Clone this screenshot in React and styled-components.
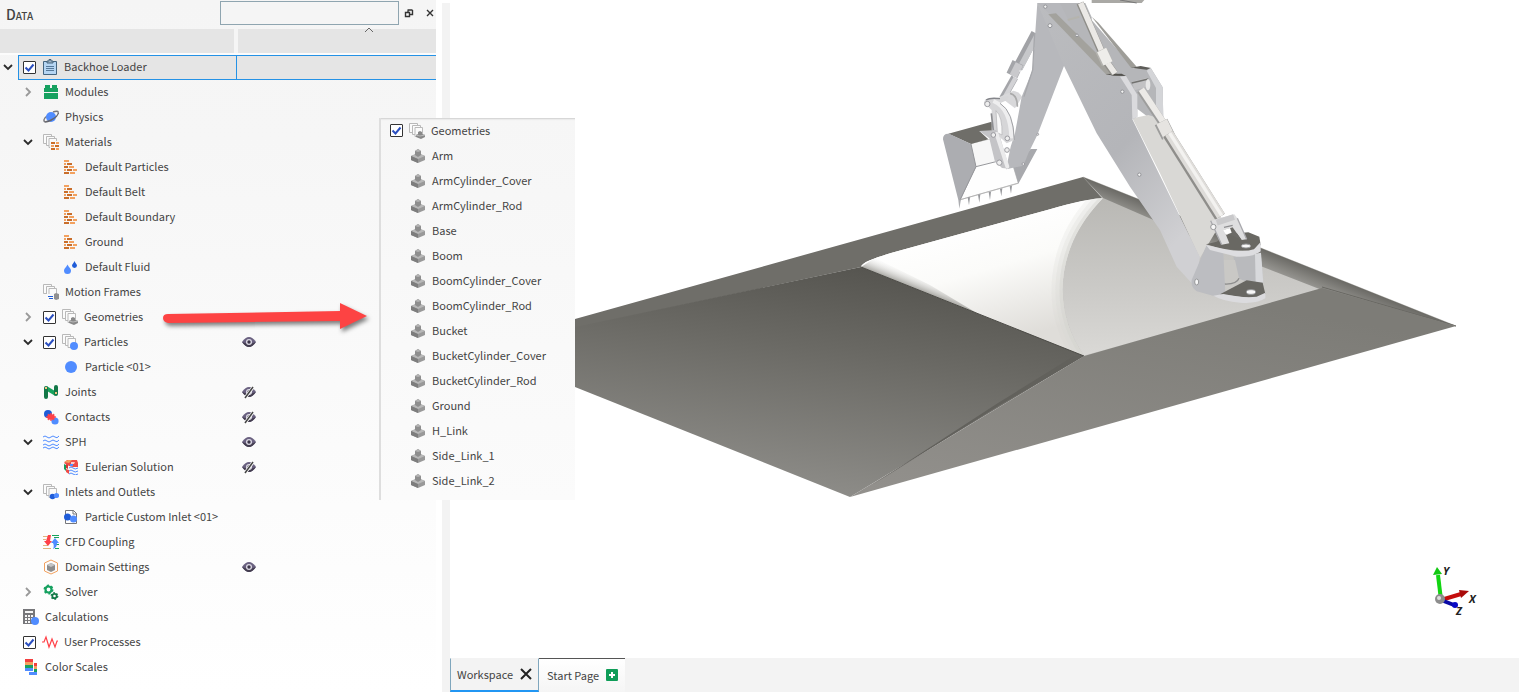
import styled, { createGlobalStyle, css } from 'styled-components';

const stack = (
    <g fill='#fbfbfb' stroke='#b9b9b9'>
        <path d='M.5.5h8v9h-8z' />
        <path d='M3.500 2.500h8v9h-8z' />
        <path d='M6 4.500h7.500v9H6z' />
    </g>
);

const icons = {
    project: (
        <>
            <path d='M1.500 2.500h13v13h-13z' fill='#b5d5f3' stroke='#44647f' />
            <path d='M5 4V2h2V.5h2V2h2v2z' fill='#9fb3c4' stroke='#44647f' />
            <path d='M4 7.500h8M4 9.500h8M4 11.500h8' stroke='#56799a' />
        </>
    ),
    modules: <path d='M1 8V4h1V1h5v3h2V1h5v3h1v4zM1 9h14v6H1z' fill='#16a160' />,
    physics: (
        <>
            <path d='M4 7C1 9 0 12 2 13' fill='none' stroke='#77777d' strokeWidth='1.400' />
            <path d='M10 3C13 2 15 2 15.500 3.500' fill='none' stroke='#77777d' strokeWidth='1.400' />
            <circle cx='8' cy='8' r='5' fill='#508cff' />
            <path d='M2 13C6 13 15 8 15.500 3.500' fill='none' stroke='#65656b' strokeWidth='1.400' />
        </>
    ),
    materials: (
        <>
            {stack}
            <path d='M7 7h9v9H7z' fill='#f8f8f8' />
            <path d='M8 9h4M12 12h4M8 15h4' stroke='#cc6d27' strokeWidth='2' />
            <path d='M13 9h3M8 12h3M13 15h3' stroke='#f2a15f' strokeWidth='2' />
        </>
    ),
    bricks: (
        <>
            <path d='M1 2h5M1 5h2M6 8h5M10 11h4M7 14h5' stroke='#f2a15f' strokeWidth='2' />
            <path d='M4 5h5M1 8h4M4 11h5M1 14h5' stroke='#c96e2b' strokeWidth='2' />
            <path d='M1 11h2' stroke='#f2a15f' strokeWidth='2' />
        </>
    ),
    fluid: (
        <>
            <path d='M4.500 5.500C3.500 8 1 9.500 1 11.500a3.500 3.500 0 0 0 7 0C8 9.500 5.500 8 4.500 5.500z' fill='#508cff' />
            <path d='M11.500 2C11 4 9 5 9 6.500a2.500 2.500 0 0 0 5 0C14 5 12 4 11.500 2z' fill='#1f5cd8' />
        </>
    ),
    motion: (
        <>
            {stack}
            <path d='M3 10h9v6H3z' fill='#fafafa' />
            <path d='M5 12.500h5M6 14.500h4' stroke='#1f5cd8' />
            <path d='M11 10l2-1 3 1v5l-3 1-2-1z' fill='#909090' />
        </>
    ),
    geometries: (
        <>
            {stack}
            <path d='M7 12l2-1V9l2-1 2 1v2l3 1v2l-4 2-5-2z' fill='#888' />
            <path d='M7 12l4 1 5-1' fill='none' stroke='#b9b9b9' />
        </>
    ),
    particles: (
        <>
            {stack}
            <circle cx='12' cy='12' r='4' fill='#508cff' />
        </>
    ),
    particle: <circle cx='8' cy='8' r='6' fill='#508cff' />,
    joints: (
        <>
            <path d='M3 4l10 6' stroke='#18a35e' strokeWidth='4' />
            <path d='M3 4v9M13 3v7' stroke='#127747' strokeWidth='4' strokeLinecap='round' />
            <path d='M2 3h2v2H2zM12 8h2v2h-2z' fill='#f3c583' />
        </>
    ),
    contacts: (
        <>
            <circle cx='5' cy='5' r='4' fill='#1f5cd8' />
            <circle cx='12' cy='12' r='3.600' fill='#508cff' />
            <path d='M8 4l1 2 2-1v2l2 1-2 1v2l-2-1-1 2-1-2-2 1V9L3 8l2-1V5l2 1z' fill='#ff4048' stroke='#ff4048' strokeWidth='.6' />
        </>
    ),
    waves: (
        <path
            d='M0 3q2-2 4 0t4 0 4 0 4-1M0 7q2-2 4 0t4 0 4 0 4-1M0 11q2-2 4 0t4 0 4 0 4-1M0 14q2-2 4 0t4 0 4 0 4-1'
            fill='none'
            stroke='#508cff'
        />
    ),
    eulerian: (
        <>
            <path d='M1 4l3-3h10l1 3v5l-5-1-4-1z' fill='#ef4b46' />
            <path d='M1 3l4-2h4L6 4z' fill='#f2a15f' />
            <path d='M7 5h3v2H7z' fill='#508cff' />
            <path d='M8 3h4l-1 2H8z' fill='#fff' opacity='.7' />
            <path d='M1 5l2 1v6l-2-2z' fill='#1a9a5a' />
            <path d='M3 10l3 1v4l-3-2z' fill='#ef4b46' />
            <path d='M3 5l2 1v4l-2-1z' fill='#d23535' />
            <path d='M6 8h10v8H6z' fill='#fafafa' />
            <path d='M6 9q2-2 4 0t5 0M6 12q2-2 4 0t5 0M6 15q2-2 4 0t5 0' fill='none' stroke='#508cff' />
        </>
    ),
    inlets: (
        <>
            {stack}
            <circle cx='9.500' cy='12.500' r='2.800' fill='#1f5cd8' />
            <circle cx='13.500' cy='11.500' r='2.600' fill='#508cff' />
        </>
    ),
    customInlet: (
        <>
            <path d='M2.500 1.500h8l3 3v10h-11z' fill='#fff' stroke='#77777b' />
            <path d='M10 1v4h4' fill='none' stroke='#77777b' />
            <circle cx='4.500' cy='8' r='3.500' fill='#1f5cd8' />
            <circle cx='10.500' cy='10' r='3.500' fill='#508cff' />
        </>
    ),
    cfd: (
        <>
            <path d='M0 2.500h6M0 5.500h3M0 11.500h5M0 14.500h8' stroke='#e0b37e' />
            <path d='M9 1.500h7M11 3.500h5M13 10.500h3M12 14.500h4' stroke='#18a35e' />
            <path d='M5 1h3L7 7h2l-4 5-4-5h2z' fill='#ff4048' />
            <path d='M12 4l4 5h-2c0 3-1 5-4 6 1-2 1-4 0-6H8z' fill='#508cff' />
        </>
    ),
    domain: (
        <>
            <path d='M1.500 4L8 1l6.500 3v8L8 15l-6.500-3z' fill='none' stroke='#f2a15f' />
            <path d='M4 6l4-2 4 2v5l-4 2-4-2z' fill='#8d8d8d' />
            <path d='M4 6l4-2 4 2-4 2z' fill='#c4c4c4' />
        </>
    ),
    solver: (
        <>
            <circle cx='5.500' cy='5.500' r='3' fill='none' stroke='#16a160' strokeWidth='2.200' />
            <circle cx='5.500' cy='5.500' r='4.300' fill='none' stroke='#16a160' strokeWidth='1.400' strokeDasharray='2.200 2.300' />
            <circle cx='11.500' cy='12' r='2.200' fill='none' stroke='#137a48' strokeWidth='1.800' />
            <circle cx='11.500' cy='12' r='3.300' fill='none' stroke='#137a48' strokeWidth='1.200' strokeDasharray='1.700 1.750' />
        </>
    ),
    calculator: (
        <>
            <path d='M0 0h12v15H0z' fill='#77777a' />
            <path d='M2 2h8v2H2zM2 6h2v2H2zM5 6h2v2H5zM8 6h2v2H8zM2 9h2v2H2zM5 9h2v2H5zM8 9h2v2H8zM2 12h2v2H2zM5 12h2v2H5z' fill='#f6f6f6' />
            <circle cx='12' cy='12' r='4' fill='#508cff' />
        </>
    ),
    process: <path d='M0 8h2l2-5 3 10 3-8 3 8 2-6h1' fill='none' stroke='#ff4048' strokeWidth='1.200' />,
    scales: (
        <>
            <path d='M2 0h8v3H2z' fill='#f33f3f' />
            <path d='M2 3h8v3H2z' fill='#f2a15f' />
            <path d='M2 6h8v3H2z' fill='#16a160' />
            <path d='M2 9h8v3H2zM6 13h8v3H6z' fill='#508cff' />
            <path d='M11 4h3v3h-3z' fill='#f33f3f' />
            <path d='M11 7h3v3h-3z' fill='#f2a15f' />
            <path d='M11 10h3v3h-3z' fill='#16a160' />
        </>
    ),
    body: (
        <>
            <path d='M1 8l7-3 7 3v4l-7 3-7-3z' fill='#999' />
            <path d='M1 8l7-3 7 3-7 3z' fill='#b8b8b8' />
            <path d='M1 8l7 3v4l-7-3z' fill='#7d7d7d' />
            <path d='M5 3l3-2 3 2v4L8 9 5 7z' fill='#8e8e8e' />
            <path d='M5 3l3-2 3 2-3 1z' fill='#b4b4b4' />
        </>
    ),
};

const tree = [
    { label: 'Backhoe Loader', icon: 'project', level: 0, open: true, checked: true, selected: true },
    { label: 'Modules', icon: 'modules', level: 1, open: false },
    { label: 'Physics', icon: 'physics', level: 1 },
    { label: 'Materials', icon: 'materials', level: 1, open: true },
    { label: 'Default Particles', icon: 'bricks', level: 2 },
    { label: 'Default Belt', icon: 'bricks', level: 2 },
    { label: 'Default Boundary', icon: 'bricks', level: 2 },
    { label: 'Ground', icon: 'bricks', level: 2 },
    { label: 'Default Fluid', icon: 'fluid', level: 2 },
    { label: 'Motion Frames', icon: 'motion', level: 1 },
    { label: 'Geometries', icon: 'geometries', level: 1, open: false, checked: true },
    { label: 'Particles', icon: 'particles', level: 1, open: true, checked: true, eye: 'on' },
    { label: 'Particle <01>', icon: 'particle', level: 2 },
    { label: 'Joints', icon: 'joints', level: 1, eye: 'off' },
    { label: 'Contacts', icon: 'contacts', level: 1, eye: 'off' },
    { label: 'SPH', icon: 'waves', level: 1, open: true, eye: 'on' },
    { label: 'Eulerian Solution', icon: 'eulerian', level: 2, eye: 'off' },
    { label: 'Inlets and Outlets', icon: 'inlets', level: 1, open: true },
    { label: 'Particle Custom Inlet <01>', icon: 'customInlet', level: 2 },
    { label: 'CFD Coupling', icon: 'cfd', level: 1 },
    { label: 'Domain Settings', icon: 'domain', level: 1, eye: 'on' },
    { label: 'Solver', icon: 'solver', level: 1, open: false },
    { label: 'Calculations', icon: 'calculator', level: 0 },
    { label: 'User Processes', icon: 'process', level: 0, checked: true },
    { label: 'Color Scales', icon: 'scales', level: 0 },
];

const geometries = [
    'Arm',
    'ArmCylinder_Cover',
    'ArmCylinder_Rod',
    'Base',
    'Boom',
    'BoomCylinder_Cover',
    'BoomCylinder_Rod',
    'Bucket',
    'BucketCylinder_Cover',
    'BucketCylinder_Rod',
    'Ground',
    'H_Link',
    'Side_Link_1',
    'Side_Link_2',
];

const Icon = ({ name }) => (
    <IconSvg viewBox='0 0 16 16' aria-hidden='true'>{icons[name]}</IconSvg>
);

const Eye = ({ off }) => (
    <IconSvg viewBox='0 0 16 16' aria-hidden='true'>
        <path d='M1 8q7-10 14 0-7 10-14 0z' fill='#6a6180' />
        <path d='M1 8q7 10 14 0-7 3-14 0z' fill='#443e50' />
        <circle cx='8' cy='8' r='3' fill='#dcd9e4' />
        <circle cx='8' cy='8' r='1.700' fill='#3b3548' />
        {off && <path d='M4 14l9-12' stroke='#fafafa' strokeWidth='3' />}
        {off && <path d='M4 14l8-11' stroke='#444' strokeWidth='1.500' />}
    </IconSvg>
);

const TreeItem = ({ item }) => (
    <Row>
        <NameColumn>
            <Toggle as={item.open === undefined ? 'span' : 'button'} $level={item.level} aria-label={item.open === undefined ? undefined : item.label}>
                {item.open !== undefined && (
                    <ChevronSvg viewBox='0 0 10 10' $open={item.open}>
                        <path d={item.open ? 'M1 3l4 4 4-4' : 'M3 1l4 4-4 4'} />
                    </ChevronSvg>
                )}
            </Toggle>
            <Cell $selected={item.selected}>
                {item.checked && <CheckBox type='checkbox' id={item.label} defaultChecked />}
                <Icon name={item.icon} />
                <Label as={item.checked ? 'label' : 'span'} htmlFor={item.checked ? item.label : undefined}>{item.label}</Label>
            </Cell>
        </NameColumn>
        <EyeCell $selected={item.selected}>
            {item.eye && <Eye off={item.eye === 'off'} />}
        </EyeCell>
    </Row>
);

const Scene = () => (
    <SceneSvg viewBox='450 0 1072 658' preserveAspectRatio='xMinYMin meet' role='img' aria-label='Backhoe loader'>
        <defs>
            <linearGradient id='slope' gradientUnits='userSpaceOnUse' x1='870' y1='255' x2='835' y2='500'>
                <stop offset='0' stopColor='#53524d' />
                <stop offset='.4' stopColor='#6a6964' />
                <stop offset='1' stopColor='#8e8d89' />
            </linearGradient>
            <linearGradient id='front' x1='0' y1='1' x2='.5' y2='0'>
                <stop offset='0' stopColor='#93918d' />
                <stop offset='1' stopColor='#7d7c77' />
            </linearGradient>
            <linearGradient id='edge' gradientUnits='userSpaceOnUse' x1='1200' y1='223' x2='1188' y2='253'>
                <stop offset='0' stopColor='#696863' />
                <stop offset='.5' stopColor='#93928e' />
                <stop offset='1' stopColor='#b9b8b4' />
            </linearGradient>
            <linearGradient id='floor' x1='0' y1='0' x2='0' y2='1'>
                <stop offset='0' stopColor='#b5b4b0' />
                <stop offset='.6' stopColor='#cac9c6' />
                <stop offset='1' stopColor='#dad9d6' />
            </linearGradient>
            <linearGradient id='pit' gradientUnits='userSpaceOnUse' x1='960' y1='225' x2='995' y2='345'>
                <stop offset='0' stopColor='#fff' />
                <stop offset='.4' stopColor='#fbfbf9' />
                <stop offset='1' stopColor='#dfddd9' />
            </linearGradient>
            <linearGradient id='lip' gradientUnits='userSpaceOnUse' x1='900' y1='283' x2='906' y2='268'>
                <stop offset='0' stopColor='#a3a29d' />
                <stop offset='1' stopColor='#fff' stopOpacity='0' />
            </linearGradient>
            <linearGradient id='plate' x1='0' y1='0' x2='.6' y2='1'>
                <stop offset='0' stopColor='#bbbcbf' />
                <stop offset='.6' stopColor='#b4b5b9' />
                <stop offset='1' stopColor='#d0d0d3' />
            </linearGradient>
            <clipPath id='pitClip'>
                <path d='M861 267C862 262 875 258 891 253L1040 212C1065 205 1085 199 1103 198C1055 246 1051 310 1084 356z' />
            </clipPath>
        </defs>

        {/* ground */}
        <path d='M1083 177L1456 326 1322 290 1084 356C1051 310 1055 246 1103 198z' fill='url(#floor)' stroke='#cccbc8' />
        <path d='M1083 177L1456 326 1322 290 1250 262 1103 198z' fill='url(#edge)' />
        <path d='M1322 287L1456 326' stroke='#696863' />
        <path d='M575 319L1083 177 1103 199C1085 199 1065 205 1040 212L891 253C875 258 862 262 861 267L575 328z' fill='#6f6e69' />
        <g clipPath='url(#pitClip)'>
            <path d='M850 190h260v170H850z' fill='url(#pit)' />
            <path d='M861 267L980 315 930 285 875 258z' fill='url(#lip)' />
            <path d='M1103 198C1055 246 1051 310 1084 356' fill='none' stroke='#d8d7d3' strokeWidth='22' opacity='.2' />
            <path d='M1103 198C1055 246 1051 310 1084 356' fill='none' stroke='#d8d7d3' strokeWidth='14' opacity='.25' />
            <path d='M1103 198C1055 246 1051 310 1084 356' fill='none' stroke='#d3d2ce' strokeWidth='6' opacity='.4' />
        </g>
        <path d='M575 327L861 267 1084 356 850 497 575 387z' fill='url(#slope)' />
        <path d='M861 267L1084 356' stroke='#4b4a45' />
        <path d='M1084 356L1322 288 1456 326 850 497z' fill='url(#front)' />
        <path d='M1074 356L1084 356 1000 405 872 485 998 403z' fill='#62615c' />

        {/* bucket, linkage and stick */}
        <g transform='translate(900 0) scale(.33333)'>
            <path d='M575 0h158l-8 9H575z' fill='#aaa9a5' />
            <path d='M660 0l50 9' stroke='#777' strokeWidth='3' />
            <path d='M213 432L272 418 300 485 340 500 355 549 178 600 228 500z' fill='#fefefe' stroke='#aaa' strokeWidth='2' />
            <path d='M213 432L272 418 283 485 228 500z' fill='#f7f7f7' />
            <path d='M145 401L275 365 280 400 238 393 265 418 213 432z' fill='#6f6e69' />
            <path d='M129 418Q128 400 147 401L213 432 228 500 183 598 178 626 175 600z' fill='#acadb1' />
            <path d='M213 432L228 500 180 600M228 500L296 483' fill='none' stroke='#96979b' strokeWidth='3' />
            <path d='M340 500L392 447H412L402 465 355 551z' fill='#a8a9ad' />
            <path d='M178 600L355 550' stroke='#aaa' strokeWidth='2' />
            <path d='M203 592l4 24 3-24zM234 584l4 24 3-25zM266 576l4 24 3-25zM300 567l4 22 3-24zM329 559l4 22 3-24z' fill='#97989c' />
            <path d='M408 100L352 205' stroke='#a1a2a6' strokeWidth='30' />
            <path d='M412 106L358 208' stroke='#c6c7ca' strokeWidth='18' />
            <path d='M354 188L336 226' stroke='#a4a5a9' strokeWidth='36' />
            <path d='M358 192L340 228' stroke='#c9c9cc' strokeWidth='24' />
            <path d='M344 232L308 296' stroke='#a4a5a9' strokeWidth='22' />
            <path d='M347 233L311 297' stroke='#d2d2d5' strokeWidth='13' />
            <path d='M358 213L376 213' stroke='#fff' strokeWidth='3' />
            <path d='M300 290L340 272Q362 278 366 292L345 325 325 310z' fill='#d8d8da' />
            <path d='M330 280Q352 284 352 320' fill='none' stroke='#aaa' strokeWidth='5' />
            <path d='M412 9H560L492 198 412 405 385 460 370 497 318 508 332 440 345 400 365 290 398 210z' fill='#b7b8bc' />
            <path d='M372 290L398 210 404 100' fill='none' stroke='#a6a7ab' strokeWidth='4' />
            <path d='M252 308Q256 290 275 296L325 288 322 300 300 310Q342 342 343 420L320 430 300 412 275 390 275 330z' fill='#d6d6d8' />
            <path d='M288 332Q308 350 306 405L292 398z' fill='#f9f9f9' stroke='#b0b0b3' strokeWidth='2' />
            <path d='M280 303Q332 325 334 415' fill='none' stroke='#eeeeef' strokeWidth='12' />
            <path d='M300 310Q341 335 343 420' fill='none' stroke='#a0a1a5' strokeWidth='3' />
            <path d='M258 300Q270 292 300 296' fill='none' stroke='#84858a' strokeWidth='4' />
            <path d='M274 340L280 392' stroke='#8e8f92' strokeWidth='5' />
            <path d='M238 393L288 390 300 410 328 506 306 504 284 482 268 415z' fill='#c4c4c7' />
            <path d='M290 402L322 500' stroke='#ebebec' strokeWidth='12' strokeLinecap='round' />
            <g fill='#eee' stroke='#9b9ba0' strokeWidth='3'>
                <circle cx='262' cy='312' r='8' />
                <circle cx='280' cy='405' r='7' />
                <circle cx='322' cy='415' r='7' />
                <circle cx='321' cy='450' r='7' />
                <circle cx='298' cy='488' r='8' />
                <circle cx='370' cy='492' r='4' />
                <circle cx='413' cy='403' r='3' />
            </g>

            {/* boom */}
            <path d='M480 9H575V60L700 205 752 203 788 262 790 360 745 352 690 310 560 170z' fill='#b5b6b9' />
            <path d='M556 9H585L575 52z' fill='#fff' />
            <path d='M575 50L595 68 710 200 693 203z' fill='#9e9d98' />
            <path d='M693 203L722 198 752 204 740 209z' fill='#5d5c58' />
            <path d='M752 204L788 262 790 358 768 346V264L740 212z' fill='#d4d5d8' />
            <path d='M503 60L538 50' stroke='#b5b4ae' strokeWidth='6' />
            <path d='M697 355L745 345 795 360 920 570 968 660 900 774 780 520z' fill='#d9d8d5' />
            <path d='M412 9L450 43 620 223 670 226 712 284V350L697 358 900 772 885 860 830 800 780 690 690 560 590 400 492 198z' fill='url(#plate)' />
            <path d='M445 43L468 40 652 222 620 225z' fill='#a3a29d' />
            <path d='M617 222L665 221 678 228 640 227z' fill='#53524e' />
            <path d='M678 228L712 284V350L697 358 695 285 660 230z' fill='#dadadd' />
            <path d='M700 258L745 246' stroke='#c2c2c4' strokeWidth='26' />
            <path d='M695 249L745 237' stroke='#727270' strokeWidth='4' />
            <ellipse cx='744' cy='254' rx='7' ry='17' fill='#e8e8e8' />
            <g strokeLinecap='butt'>
                <path d='M540 9L606 160M618 185L643 220' stroke='#8f8e89' strokeWidth='22' />
                <path d='M542 9L608 160M620 185L645 220' stroke='#ebe9e6' strokeWidth='17' />
                <path d='M603 150L622 190' stroke='#b4b3af' strokeWidth='36' />
                <path d='M605 150L624 190' stroke='#eeedea' strokeWidth='30' />
                <path d='M722 270L792 375' stroke='#9d9d9c' strokeWidth='25' />
                <path d='M724 268L794 373' stroke='#eceae7' strokeWidth='19' />
                <path d='M783 366L805 410' stroke='#9d9d9c' strokeWidth='42' />
                <path d='M785 365L807 410' stroke='#e6e4e1' strokeWidth='35' />
                <path d='M804 402L960 650' stroke='#8f8e8b' strokeWidth='34' />
                <path d='M807 400L963 648' stroke='#dedcd9' strokeWidth='27' />
                <path d='M809 399L965 647' stroke='#f3f2f0' strokeWidth='10' />
            </g>
            <g fill='#f3f3f3' stroke='#929397' strokeWidth='3'>
                <circle cx='436' cy='20' r='5' />
                <circle cx='450' cy='77' r='6' />
                <circle cx='667' cy='275' r='5' />
                <circle cx='718' cy='524' r='5' />
                <circle cx='531' cy='106' r='4' />
            </g>
        </g>

        {/* mounting base */}
        <g transform='translate(1100 150) scale(.33333)'>
            <path d='M400 320L482 310 490 400 440 395 415 385z' fill='#b9babd' />
            <path d='M465 312L483 308 490 398 467 398z' fill='#d8d9dc' />
            <path d='M360 330H405L417 385Q410 402 370 402z' fill='#c9c8c5' />
            <path d='M372 402Q410 404 417 385' fill='none' stroke='#8c8c8c' strokeWidth='4' />
            <path d='M275 390L320 285 370 310 376 430 355 442 290 424Q272 412 275 390z' fill='#bcbdc1' />
            <path d='M360 433L440 391 488 398 496 432Q480 446 430 442z' fill='#686762' />
            <path d='M340 437L370 432Q430 445 470 440L496 428V445Q470 462 420 458 370 454 340 437z' fill='#dbdbde' />
            <path d='M318 283L350 275 385 252 445 247 478 260 482 285 450 303 370 298z' fill='#696863' />
            <path d='M318 285L370 296Q430 308 462 298L482 276V304Q460 322 410 320L330 300z' fill='#dddde0' />
            <path d='M330 215L350 207 403 193 412 205 440 268 425 270 398 232 372 240 388 280 365 284z' fill='#dededf' />
            <path d='M372 240L398 232 425 270 400 258 385 252z' fill='#6c6b67' />
            <path d='M370 240L390 234 395 248 378 254z' fill='#fff' />
            <path d='M350 218L402 201' stroke='#c9c9cb' strokeWidth='18' />
            <path d='M372 232L398 226' stroke='#8e8e90' strokeWidth='4' />
            <path d='M332 212L365 284M412 205L440 268' stroke='#a9a9ad' strokeWidth='4' />
            <g fill='#f7f7f7' stroke='#97989a' strokeWidth='3'>
                <circle cx='340' cy='231' r='8' />
                <ellipse cx='438' cy='288' rx='14' ry='6' />
                <ellipse cx='453' cy='426' rx='14' ry='7' />
                <ellipse cx='290' cy='396' rx='6' ry='9' />
            </g>
        </g>
    </SceneSvg>
);

const App = () => {
    return (
        <Container>
            <GlobalStyle />
            <Sidebar>
                <PanelHeader>
                    <Title>Data</Title>
                    <Search type='text' aria-label='Search' />
                    <HeaderButton aria-label='Float'>
                        <GlyphSvg viewBox='0 0 10 10'>
                            <path d='M1.500 4.500h4v4h-4zM4 4V2.500M3.500 2h5M8.500 2v4.500H6' />
                        </GlyphSvg>
                    </HeaderButton>
                    <HeaderButton aria-label='Close panel'>
                        <GlyphSvg viewBox='0 0 10 10'>
                            <path d='M2 2l6 6M8 2l-6 6' />
                        </GlyphSvg>
                    </HeaderButton>
                </PanelHeader>
                <ColumnHeads>
                    <ColumnHead />
                    <ColumnHead>
                        <SortSvg viewBox='0 0 10 6'><path d='M1 5l4-4 4 4' /></SortSvg>
                    </ColumnHead>
                </ColumnHeads>
                <List>
                    {tree.map((item) => <TreeItem key={item.label} item={item} />)}
                </List>
            </Sidebar>
            <Splitter />
            <Main>
                <Viewport>
                    <Scene />
                    <Axes viewBox='0 0 60 60' role='img' aria-label='Axes'>
                        <path d='M17 38L14 13' stroke='#12d512' strokeWidth='4' />
                        <path d='M13 5L9 13 18 12z' fill='#12c812' />
                        <path d='M17 38L37 32' stroke='#c50d0d' strokeWidth='4' />
                        <path d='M45 29L35 28 37 36z' fill='#a90b0b' />
                        <path d='M17 38L30 43' stroke='#0909a5' strokeWidth='4' />
                        <circle cx='31' cy='43' r='3' fill='#0a0ac4' />
                        <circle cx='16' cy='37' r='5' fill='#8d8d8d' />
                        <circle cx='15' cy='36' r='2' fill='#ddd' />
                        <text x='19' y='13'>Y</text>
                        <text x='45' y='41'>X</text>
                        <text x='32' y='53'>Z</text>
                    </Axes>
                </Viewport>
                <Tabs>
                    <Tab $current>
                        Workspace
                        <TabSvg viewBox='0 0 12 12'><path d='M1 1l10 10M11 1L1 11' stroke='#222' strokeWidth='2' /></TabSvg>
                    </Tab>
                    <Tab>
                        Start Page
                        <TabSvg viewBox='0 0 12 12'>
                            <rect width='12' height='12' rx='1' fill='#0f9d58' />
                            <path d='M6 3v6M3 6h6' stroke='#fff' strokeWidth='2' />
                        </TabSvg>
                    </Tab>
                </Tabs>
            </Main>
            <Popup>
                <PopupRow>
                    <CheckBox type='checkbox' id='all-geometries' defaultChecked />
                    <Icon name='geometries' />
                    <Label as='label' htmlFor='all-geometries'>Geometries</Label>
                </PopupRow>
                {geometries.map((name) => (
                    <PopupRow key={name} $child>
                        <Icon name='body' />
                        <Label>{name}</Label>
                    </PopupRow>
                ))}
            </Popup>
            <Arrow viewBox='0 0 216 40' aria-hidden='true'>
                <path d='M7 17Q7 13 12 13L184 10V2L211 15 184 28V20L12 22Q7 21 7 17z' fill='#fd4343' />
            </Arrow>
        </Container>
    );
}

const GlobalStyle = createGlobalStyle`
    * {
        box-sizing: border-box;
    }

    body {
        margin: 0;
        background: #fff;
        color: #444;
        font-family: 'Noto Sans CJK SC', 'Noto Sans', sans-serif;
        font-size: 11px;
        line-height: 16px;
    }

    button {
        padding: 0;
        border: 0;
        background: none;
        color: inherit;
        font: inherit;
    }
`;

const Container = styled.div`
    display: flex;
    position: relative;
    min-height: 100vh;
    overflow: hidden;
`;

const Sidebar = styled.aside`
    flex: 0 0 436px;
    background: linear-gradient(#f5f5f5, #f6f6f6 20%, #fff);
`;

const PanelHeader = styled.header`
    display: flex;
    height: 29px;
    padding: 1px 0 4px 6px;
`;

const Title = styled.h2`
    flex: 1;
    margin: 0;
    padding-top: 3px;
    font-size: 14px;
    font-weight: 500;
    font-variant: small-caps;
    line-height: 20px;
`;

const Search = styled.input`
    width: 179px;
    height: 24px;
    border: 1px solid #8fa5b0;
    background: #f5f5f5;
`;

const HeaderButton = styled.button`
    display: flex;
    align-items: center;
    width: 21px;
    padding-left: 5px;

    &:last-child {
        width: 16px;
    }
`;

const GlyphSvg = styled.svg`
    width: 10px;
    height: 10px;
    fill: none;
    stroke: #333;
    stroke-width: 1.4;
`;

const ColumnHeads = styled.div`
    display: grid;
    grid-template-columns: 234px 1fr;
    column-gap: 4px;
    height: 26px;
    border-bottom: 2px solid #fcfcfc;
    background: #f5f5f5;
`;

const ColumnHead = styled.div`
    display: flex;
    justify-content: center;
    background: #e5e5e5;
`;

const SortSvg = styled.svg`
    width: 10px;
    height: 6px;
    margin-left: 64px;
    margin-top: -2px;
    fill: none;
    stroke: #666;
`;

const List = styled.ul`
    margin: 0;
    padding: 0;
    list-style: none;
`;

const Row = styled.li`
    display: grid;
    grid-template-columns: 237px 1fr;
    height: 25px;
`;

const NameColumn = styled.div`
    display: flex;
`;

const selectedCell = css`
    border-color: #2492e6;
    background: #e5e5e5;
`;

const Toggle = styled.button`
    display: flex;
    flex: none;
    align-items: center;
    width: 18px;
    margin-left: ${(props) => props.$level * 20}px;
    padding: 0 0 1px 3px;
`;

const ChevronSvg = styled.svg`
    width: 10px;
    height: 10px;
    fill: none;
    stroke: ${(props) => (props.$open ? '#2b2b2b' : '#999')};
    stroke-width: 1.8;
`;

const Cell = styled.div`
    display: flex;
    flex: 1;
    align-items: center;
    padding: 0 0 1px 4px;
    border: 1px solid transparent;
    ${(props) => props.$selected && selectedCell}
`;

const EyeCell = styled.div`
    display: flex;
    align-items: center;
    padding: 0 0 1px 4px;
    border: 0 solid transparent;
    border-width: 1px 0;
    ${(props) => props.$selected && selectedCell}
`;

const IconSvg = styled.svg`
    flex: none;
    width: 16px;
    height: 16px;
`;

const CheckBox = styled.input`
    flex: none;
    appearance: none;
    width: 13px;
    height: 13px;
    margin: 0 6px 0 0;
    border: 1px solid #333;
    border-radius: 1px;
    background: #fff;

    &:checked {
        background: #fff url("data:image/svg+xml,%3Csvg xmlns='http://www.w3.org/2000/svg' viewBox='0 0 11 11'%3E%3Cpath d='M1.500 5.500l3 3 5-6' fill='none' stroke='%232b4fc0' stroke-width='2'/%3E%3C/svg%3E");
    }
`;

const Label = styled.span`
    margin-left: 6px;
    padding-bottom: 2px;
    white-space: nowrap;
`;

const Splitter = styled.div`
    flex: 0 0 8px;
    margin: 3px 0 0 6px;
    background: #f3f3f3;
`;

const Main = styled.main`
    display: flex;
    flex: 1;
    flex-direction: column;
    min-width: 0;
`;

const Viewport = styled.section`
    flex: 1;
    position: relative;
    min-height: 0;
`;

const SceneSvg = styled.svg`
    display: block;
    width: 100%;
`;

const Axes = styled.svg`
    position: absolute;
    right: 38px;
    bottom: 36px;
    width: 60px;
    height: 60px;
    font-family: 'Open Sans', 'DejaVu Sans', sans-serif;
    font-size: 11px;
    font-style: italic;
    font-weight: bold;
    fill: #222;
`;

const Tabs = styled.nav`
    display: flex;
    height: 34px;
    margin-right: 3px;
    background: #f3f3f3;
`;

const Tab = styled.button`
    display: flex;
    align-items: center;
    gap: 7px;
    padding: 0 7px 2px 8px;
    border-top: 1px solid #555;
    background: linear-gradient(#fff, #f5f5f5);

    ${(props) => props.$current && css`
        padding: 0 6px 2px;
        border: 1px solid #7fa6bd;
        border-top-color: transparent;
        border-bottom: 2px solid #2196f3;
        background: #f3f3f3;
    `}
`;

const TabSvg = styled.svg`
    width: 12px;
    height: 12px;
`;

const Popup = styled.ul`
    position: absolute;
    top: 118px;
    left: 379px;
    width: 196px;
    height: 382px;
    margin: 0;
    padding: 0;
    overflow: hidden;
    list-style: none;
    border-left: 2px solid #dedede;
    background: linear-gradient(#f6f6f6, #fbfbfb);
    box-shadow: inset 0 3px 2px -2px #ccc;
`;

const PopupRow = styled.li`
    display: flex;
    align-items: center;
    height: 25px;
    padding-left: ${(props) => (props.$child ? 29 : 9)}px;
`;

const Arrow = styled.svg`
    position: absolute;
    top: 301px;
    left: 156px;
    width: 216px;
    height: 40px;
    filter: drop-shadow(2px 3px 2px rgba(0, 0, 0, 0.5));
    pointer-events: none;
`;

export default App;
